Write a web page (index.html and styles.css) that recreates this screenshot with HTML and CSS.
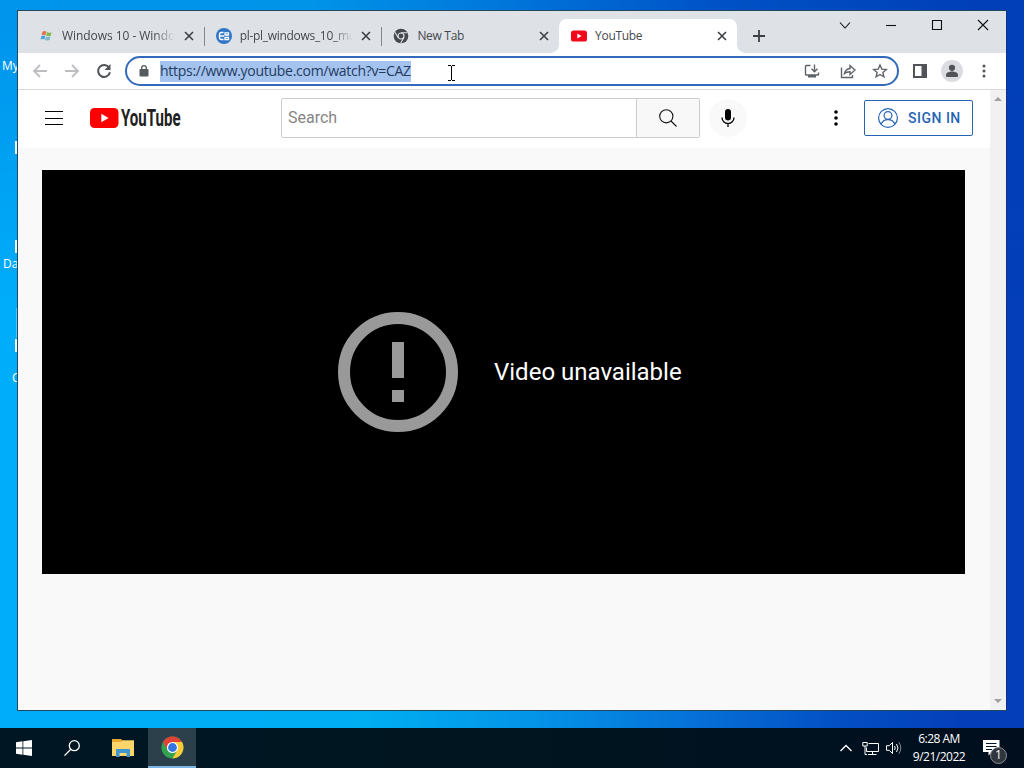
FILE: index.html
```html
<!DOCTYPE html>
<html lang="en">
<head>
    <meta charset="UTF-8">
    <title>YouTube</title>
    <link rel="stylesheet" href="styles.css">
</head>
<body>
<div class="desktop">

    <!-- Desktop shortcuts, mostly hidden behind the window -->
    <span class="shortcut shortcut-my">My</span>
    <span class="shortcut shortcut-da">Da</span>
    <span class="shortcut shortcut-c">C</span>
    <i class="icon-edge edge-1"></i>
    <i class="icon-edge edge-2"></i>
    <i class="icon-edge edge-3"></i>
    <i class="icon-edge edge-thin"></i>

    <div class="window">
        <div class="tabstrip">
            <div class="tab">
                <svg class="favicon" viewBox="0 0 16 16">
                    <path d="M4.500 3.500Q6.500 2.500 8.300 3.700L7.500 7.200Q5.500 6.200 3.700 7.100z" fill="#e8714a"/>
                    <path d="M9 4Q11.200 5.300 13.600 4.200L12.700 7.700Q10.300 8.700 8.200 7.500z" fill="#83b94c"/>
                    <path d="M3.400 8Q5.400 7 7.300 8.100L6.500 11.600Q4.500 10.600 2.600 11.500z" fill="#49a4dc"/>
                    <path d="M8 8.400Q10 9.600 12.500 8.600L11.700 12.100Q9.400 13.100 7.200 11.900z" fill="#7fb9c9"/>
                </svg>
                <span class="tab-title faded">Windows 10 - Windo</span>
                <svg class="tab-close" viewBox="0 0 16 16"><path d="M4 4l8 8M12 4l-8 8"/></svg>
            </div>
            <div class="tab divided">
                <svg class="favicon" viewBox="0 0 16 16">
                    <circle cx="8" cy="8" r="8" fill="#3277c6"/>
                    <path d="M7.500 4.500H5.500Q3.500 4.500 3.500 6.500V9.500Q3.500 11.500 5.500 11.500H7.500M3.500 8H8M9 4.800h3.500v2.200H9zM9 9.300h3.500v2.200H9z" fill="none" stroke="#fff" stroke-width="1.300"/>
                </svg>
                <span class="tab-title faded tight">pl-pl_windows_10_mu</span>
                <svg class="tab-close" viewBox="0 0 16 16"><path d="M4 4l8 8M12 4l-8 8"/></svg>
            </div>
            <div class="tab divided">
                <svg class="favicon" viewBox="0 0 16 16">
                    <circle cx="8" cy="8" r="7.300" fill="#45494e"/>
                    <circle cx="8" cy="8" r="3" fill="#45494e" stroke="#dee1e6" stroke-width="1.200"/>
                    <path d="M8 4.700H14.400M5.200 9.700L2 4.300M10.800 9.700L7.700 15" stroke="#dee1e6" stroke-width="1.100"/>
                </svg>
                <span class="tab-title tight">New Tab</span>
                <svg class="tab-close" viewBox="0 0 16 16"><path d="M4 4l8 8M12 4l-8 8"/></svg>
            </div>
            <div class="tab active">
                <svg class="favicon" viewBox="0 0 16 16">
                    <rect y="2.500" width="16" height="11" rx="2.600" fill="#f2061a"/>
                    <path d="M6.300 5.600v4.800L10.500 8z" fill="#fff"/>
                </svg>
                <span class="tab-title tight">YouTube</span>
                <svg class="tab-close" viewBox="0 0 16 16"><path d="M4 4l8 8M12 4l-8 8"/></svg>
            </div>
            <svg class="new-tab" viewBox="0 0 16 16"><path d="M8 2v12M2 8h12"/></svg>
            <div class="caption-buttons">
                <svg viewBox="0 0 46 28"><path d="M18 11.500l5 5.500 5-5.500"/></svg>
                <svg viewBox="0 0 46 28"><path d="M18 14.500h10"/></svg>
                <svg viewBox="0 0 46 28"><path d="M18.500 9.500h9v9h-9z"/></svg>
                <svg viewBox="0 0 46 28"><path d="M18 9l10 10M28 9l-10 10"/></svg>
            </div>
        </div>

        <div class="toolbar">
            <svg class="nav-btn disabled" viewBox="0 0 16 16"><path d="M15 8H2M8 2L2 8 8 14"/></svg>
            <svg class="nav-btn disabled" viewBox="0 0 16 16"><path d="M1 8h13M8 2l6 6-6 6"/></svg>
            <svg class="nav-btn" viewBox="0 0 16 16"><path d="M13.200 4.700A6 6 0 1 0 14 9.300"/><path d="M14.500 1v6h-6z" class="solid"/></svg>
            <div class="omnibox">
                <svg class="lock" viewBox="0 0 10 12"><rect x=".5" y="4" width="9" height="7.500" rx="1"/><path d="M2.700 4.500V3a2.300 2.300 0 0 1 4.600 0v1.500"/></svg>
                <span class="url">https://www.youtube.com/watch?v=CAZ</span>
                <div class="omnibox-actions">
                    <svg viewBox="0 0 16 16"><path d="M6.500 2.500H2.300a.8.800 0 0 0-.8.800v7.900a.8.800 0 0 0 .8.800h11.400a.8.800 0 0 0 .8-.8V9.500M10.500 1.500v7M7.500 5.800l3 3 3-3"/><path d="M4 12h8v2.500H4z" class="solid"/></svg>
                    <svg viewBox="0 0 16 16"><path d="M1.500 4.500v10h11V12M4.500 10.500Q5.500 6 10 5.500V2.500l5 4.500-5 4.500V8.700Q6.500 8.700 4.500 10.500z"/></svg>
                    <svg viewBox="0 0 16 16"><path d="M8 2l1.800 4.100 4.500.4-3.400 2.900 1 4.400L8 11.500l-3.900 2.300 1-4.400L1.700 6.500l4.500-.4z"/></svg>
                </div>
            </div>
            <div class="toolbar-actions">
                <svg viewBox="0 0 16 16"><path d="M1 1h14v14H1zM3 3v10h6.500V3z" fill-rule="evenodd"/></svg>
                <svg class="avatar" viewBox="0 0 22 22"><circle cx="11" cy="11" r="11" fill="#dadce2"/><circle cx="11" cy="7.800" r="3.100"/><path d="M5 16v-1.200c0-2.300 3.600-3.200 6-3.200s6 .9 6 3.200V16q0 1-1 1H6q-1 0-1-1z"/></svg>
                <svg viewBox="0 0 16 16"><circle cx="8" cy="3" r="1.500"/><circle cx="8" cy="8" r="1.500"/><circle cx="8" cy="13" r="1.500"/></svg>
            </div>
        </div>

        <div class="viewport">
            <div class="page">
                <div class="masthead">
                    <svg class="guide" viewBox="0 0 18 14"><path d="M0 .5h18M0 7.500h18M0 13.500h18"/></svg>
                    <svg class="logo" viewBox="0 0 92 28">
                        <rect y="4" width="28.500" height="20" rx="4.500" fill="#f00"/>
                        <path d="M11.300 9.800v8.400L18.600 14z" fill="#fff"/>
                        <text x="31" y="22" textLength="59.500" lengthAdjust="spacingAndGlyphs">YouTube</text>
                    </svg>
                    <div class="search">
                        <div class="search-input">Search</div>
                        <div class="search-btn">
                            <svg viewBox="0 0 20 20"><circle cx="8.300" cy="8.300" r="6.600"/><path d="M13 13l5.500 5.500"/></svg>
                        </div>
                    </div>
                    <div class="mic">
                        <svg viewBox="0 0 16 20"><rect x="5" y="1" width="6" height="11.500" rx="3"/><path d="M2 9.500a6 6 0 0 0 12 0M8 15.500V19" fill="none" stroke="#030303" stroke-width="1.300"/></svg>
                    </div>
                    <svg class="settings" viewBox="0 0 4 18"><circle cx="2" cy="3" r="1.800"/><circle cx="2" cy="9" r="1.800"/><circle cx="2" cy="15" r="1.800"/></svg>
                    <div class="sign-in">
                        <svg viewBox="0 0 20 20"><circle cx="10" cy="10" r="9.400"/><circle cx="10" cy="7.500" r="3.900"/><path d="M3 16.300Q5 11.600 10 11.600T17 16.300"/></svg>
                        <span>SIGN IN</span>
                    </div>
                </div>
                <div class="player">
                    <svg class="warning" viewBox="0 0 120 120"><circle cx="60" cy="60" r="54"/><path d="M60 30v36M60 78v12"/></svg>
                    <span>Video unavailable</span>
                </div>
            </div>
            <div class="scrollbar">
                <i class="arrow-up"></i>
                <i class="arrow-down"></i>
            </div>
        </div>
    </div>

    <svg class="cursor" viewBox="0 0 7 16"><path d="M0 .5h3M4 .5h3M0 15.500h3M4 15.500h3M3.500 1v14"/></svg>

    <div class="taskbar">
        <div class="task">
            <svg width="16" height="16" viewBox="0 0 16 16" fill="#fff"><path d="M0 2.200L6.500 1.300V7.600H0zM7.300 1.200L16 0v7.600H7.300zM0 8.400h6.500v6.300L0 13.800zM7.300 8.400H16V16l-8.700-1.200z"/></svg>
        </div>
        <div class="task">
            <svg width="16" height="16" viewBox="0 0 16 16" fill="none" stroke="#fff" stroke-width="1.300"><circle cx="10.300" cy="5.700" r="5"/><path d="M6.800 9.200L.5 15.600"/></svg>
        </div>
        <div class="task explorer">
            <svg width="22" height="18" viewBox="0 0 22 18">
                <path d="M0 0h9l1.500 1.500H22v15.500H0z" fill="#e8a92e"/>
                <path d="M0 3h9l1.500-1.500H22V17H0z" fill="#fcd56b"/>
                <path d="M4 10h14V18h-3.500v-4h-7v4H4z" fill="#3f97cf"/>
            </svg>
        </div>
        <div class="task running">
            <svg width="23" height="23" viewBox="0 0 23 23">
                <circle cx="11.500" cy="11.500" r="11" fill="#32a350"/>
                <path d="M2 6A11 11 0 0 1 21 6H11.500L6.700 14.300z" fill="#e24135"/>
                <path d="M21 6A11 11 0 0 1 11.500 22.500L16.300 14.200 11.500 6z" fill="#fccb35"/>
                <circle cx="11.500" cy="11.500" r="5.600" fill="#fff"/>
                <circle cx="11.500" cy="11.500" r="4.400" fill="#3476e0"/>
            </svg>
        </div>
        <div class="tray">
            <svg width="12" height="8" viewBox="0 0 12 8"><path d="M.5 7L6 1.500 11.500 7" stroke-width="1.300"/></svg>
            <svg class="network" width="17" height="15" viewBox="0 0 17 15"><path d="M6.500 2.500h10v8h-12v-4M10.500 10.500v3M6 13.500h8.500M.8 1.500h4.400v3.500H.8zM3 5v8.500h2"/></svg>
            <svg class="volume" width="16" height="14" viewBox="0 0 16 14"><path d="M.5 4.700h2.700L6.500 1.500v11L3.200 9.300H.5zM8.500 5q1.500 2 0 4M10.500 3q3 4 0 8"/><path d="M12.800 1.200q4 5.800 0 11.600" opacity=".5"/></svg>
            <div class="clock">
                <span>6:28 AM</span>
                <span>9/21/2022</span>
            </div>
            <div class="notifications">
                <svg width="17" height="17" viewBox="0 0 17 17"><path d="M0 0h16.500v12H9L5.500 15.500V12H0z" fill="#fff" stroke="none"/><path d="M3 3.500h10.500M3 6.500h10.500M3 9.500h6" stroke="#061321"/></svg>
                <span class="badge">1</span>
            </div>
        </div>
    </div>
</div>
</body>
</html>
```
FILE: styles.css
```css
* {
    box-sizing: border-box;
}
body {
    margin: 0;
    font-family: "Open Sans", "Noto Sans", sans-serif;
}
svg {
    display: block;
    flex-shrink: 0;
}
.desktop {
    position: relative;
    width: 1024px;
    height: 768px;
    overflow: hidden;
    background: linear-gradient(to right, #00adfa 0%, #00aef2 36%, #0494e8 52%, #0670d8 68%, #034fc3 82%, #043fb9 94%);
}
.desktop::before {
    content: "";
    position: absolute;
    top: 0;
    left: 0;
    width: 100%;
    height: 300px;
    background: linear-gradient(to right, #0095ec, #0094e9 30%, #0078dc 48%, #0052c6 70%, #003fb7 95%);
    -webkit-mask-image: linear-gradient(#000 10%, transparent);
    mask-image: linear-gradient(#000 10%, transparent);
}
.shortcut {
    position: absolute;
    font-size: 12px;
    line-height: 16px;
    color: #fff;
}
.shortcut-my {
    left: 2px;
    top: 58px;
}
.shortcut-da {
    left: 3px;
    top: 256px;
}
.shortcut-c {
    left: 12px;
    top: 370px;
}
.icon-edge {
    position: absolute;
    left: 15px;
    width: 2px;
    height: 13px;
    background: #e8f6ff;
}
.edge-1 {
    top: 141px;
}
.edge-2 {
    top: 240px;
}
.edge-3 {
    top: 339px;
}
.edge-thin {
    top: 308px;
    left: 16px;
    width: 1px;
    height: 30px;
    background: #55c4f8;
}

/* Browser window */
.window {
    position: absolute;
    left: 17px;
    top: 10px;
    width: 990px;
    height: 701px;
    border: 1px solid #20485f;
    border-right-color: #10308a;
    display: flex;
    flex-direction: column;
    background: #fff;
}
.tabstrip {
    height: 42px;
    padding: 8px 0 0 8px;
    display: flex;
    background: #dee1e6;
}
.tab {
    position: relative;
    width: 177.700px;
    padding: 0 7px 0 12px;
    display: flex;
    align-items: center;
    font-size: 12px;
    color: #45494d;
}
.tab.divided::before {
    content: "";
    position: absolute;
    left: 0;
    width: 1px;
    height: 19px;
    background: #84888d;
}
.tab.active {
    background: #fff;
    border-radius: 8px 8px 0 0;
}
.tab.active::before,
.tab.active::after {
    content: "";
    position: absolute;
    bottom: 0;
    width: 8px;
    height: 8px;
}
.tab.active::before {
    left: -8px;
    background: radial-gradient(circle at 0 0, transparent 7.500px, #fff 8px);
}
.tab.active::after {
    right: -8px;
    background: radial-gradient(circle at 100% 0, transparent 7.500px, #fff 8px);
}
.favicon {
    width: 16px;
    height: 16px;
    margin-right: 8px;
}
.tab-title {
    width: 115px;
    margin-right: auto;
    padding-bottom: 2px;
    white-space: nowrap;
    letter-spacing: -0.050px;
}
.tab-title.tight {
    letter-spacing: -0.300px;
}
.tab-title.faded {
    -webkit-mask-image: linear-gradient(to right, #000 80%, transparent 98%);
    mask-image: linear-gradient(to right, #000 80%, transparent 98%);
}
.tab-close {
    width: 16px;
    height: 16px;
    stroke: #3c4043;
    stroke-width: 1.600;
}
.new-tab {
    width: 16px;
    height: 16px;
    margin: 9px 0 0 14px;
    stroke: #3c4043;
    stroke-width: 1.800;
}
.caption-buttons {
    display: flex;
    margin: -8px 0 0 auto;
}
.caption-buttons svg {
    width: 46px;
    height: 28px;
    fill: none;
    stroke: #111;
    stroke-width: 1.100;
}
.toolbar {
    height: 37px;
    padding-left: 14px;
    display: flex;
    align-items: center;
    border-bottom: 1px solid #d9dadc;
}
.nav-btn {
    width: 16px;
    height: 16px;
    margin-right: 16px;
    fill: none;
    stroke: #505458;
    stroke-width: 2;
}
.nav-btn.disabled {
    stroke: #bcbec1;
    stroke-width: 1.800;
}
.nav-btn .solid {
    fill: #505458;
    stroke: none;
}
.omnibox {
    width: 774px;
    height: 30px;
    margin-left: -3px;
    padding: 0 9px 0 12px;
    display: flex;
    align-items: center;
    border: 2px solid #3269ba;
    border-radius: 15px;
}
.lock {
    width: 10px;
    height: 12px;
    fill: #555a5f;
}
.lock path {
    fill: none;
    stroke: #555a5f;
    stroke-width: 1.300;
}
.url {
    width: 251px;
    margin-left: 11px;
    padding-bottom: 2px;
    background: #a4c3ee;
    color: #243b5e;
    font-size: 14px;
    line-height: 19px;
    letter-spacing: -0.280px;
    white-space: nowrap;
}
.omnibox-actions {
    display: flex;
    margin-left: auto;
}
.omnibox-actions svg {
    width: 16px;
    height: 16px;
    margin-left: 16px;
    fill: none;
    stroke: #5f6368;
    stroke-width: 1.400;
}
.omnibox-actions svg:nth-child(2) {
    margin-left: 20px;
}
.omnibox-actions .solid {
    fill: #5f6368;
    stroke: none;
}
.toolbar-actions {
    display: flex;
    align-items: center;
    margin-left: 13px;
    fill: #505357;
}
.toolbar-actions svg {
    width: 16px;
}
.toolbar-actions .avatar {
    width: 22px;
    margin: 0 13px;
}

/* YouTube page */
.viewport {
    flex: 1;
    display: flex;
}
.page {
    flex: 1;
    background: #f9f9f9;
    font-family: Roboto, sans-serif;
}
.masthead {
    height: 58px;
    padding: 0 17px 2px 27px;
    display: flex;
    align-items: center;
    background: #fff;
}
.guide {
    width: 18px;
    height: 14px;
    stroke: #030303;
}
.logo {
    width: 92px;
    height: 28px;
    margin-left: 27px;
}
.logo text {
    font: bold 24px Roboto, sans-serif;
    fill: #212121;
}
.search {
    width: 419px;
    height: 40px;
    margin-left: 99px;
    display: flex;
    border: 1px solid #ccc;
    border-radius: 2px;
}
.search-input {
    flex: 1;
    padding-left: 6px;
    font-size: 16px;
    line-height: 37px;
    color: #858585;
}
.search-btn {
    width: 63px;
    display: flex;
    align-items: center;
    justify-content: center;
    background: #f8f8f8;
    border-left: 1px solid #ccc;
}
.search-btn svg {
    width: 20px;
    fill: none;
    stroke: #111;
    stroke-width: 1.100;
}
.mic {
    width: 38px;
    height: 38px;
    margin-left: 9px;
    display: flex;
    align-items: center;
    justify-content: center;
    border-radius: 50%;
    background: #f9f9f9;
}
.mic svg {
    width: 16px;
    fill: #030303;
}
.settings {
    width: 4px;
    margin-left: auto;
    fill: #030303;
}
.sign-in {
    width: 109px;
    height: 36px;
    margin-left: 26px;
    padding-left: 13px;
    display: flex;
    align-items: center;
    border: 1px solid #2765b4;
    border-radius: 2px;
    color: #2765b4;
    font-size: 14px;
    font-weight: 500;
    letter-spacing: 0.500px;
    white-space: nowrap;
}
.sign-in svg {
    width: 20px;
    margin-right: 10px;
    fill: none;
    stroke: #2765b4;
    stroke-width: 1.200;
}
.player {
    width: 923px;
    height: 404px;
    margin: 22px 0 0 24px;
    padding-left: 296px;
    display: flex;
    align-items: center;
    background: #000;
    color: #fff;
    font-size: 24px;
}
.warning {
    width: 120px;
    margin-right: 36px;
    fill: none;
    stroke: #999;
    stroke-width: 12;
}
.scrollbar {
    width: 16px;
    padding: 7px 0 7px;
    display: flex;
    flex-direction: column;
    justify-content: space-between;
    align-items: center;
    background: #f1f1f1;
}
.arrow-up,
.arrow-down {
    border: 4px solid transparent;
}
.arrow-up {
    border-top: 0;
    border-bottom-color: #a0a0a0;
}
.arrow-down {
    border-bottom: 0;
    border-top-color: #a0a0a0;
}
.cursor {
    position: absolute;
    left: 448px;
    top: 65px;
    width: 7px;
    height: 16px;
    stroke: #000;
}

/* Taskbar */
.taskbar {
    position: absolute;
    left: 0;
    bottom: 0;
    width: 100%;
    height: 40px;
    display: flex;
    background: linear-gradient(to right, #001723, #001520 50%, #000e1e);
}
.task {
    width: 48px;
    display: flex;
    align-items: center;
    justify-content: center;
}
.task.explorer {
    width: 52px;
    padding-left: 1px;
}
.task.running {
    background: #2c404b;
    border-bottom: 2px solid #79b4e2;
}
.tray {
    margin-left: auto;
    padding-right: 24px;
    display: flex;
    align-items: center;
    fill: none;
    stroke: #fff;
}
.network {
    margin-left: 10px;
}
.volume {
    margin-left: 7px;
}
.clock {
    width: 58px;
    margin-left: 8px;
    display: flex;
    flex-direction: column;
    align-items: center;
    font-size: 12px;
    line-height: 18px;
    letter-spacing: -0.500px;
    color: #fff;
    white-space: nowrap;
}
.notifications {
    position: relative;
    margin-left: 15px;
}
.badge {
    position: absolute;
    left: 7px;
    top: 7px;
    width: 17px;
    height: 17px;
    border: 1px solid #8b8f94;
    border-radius: 50%;
    background: #30363d;
    color: #fff;
    font-size: 12px;
    line-height: 14px;
    text-align: center;
}
```
